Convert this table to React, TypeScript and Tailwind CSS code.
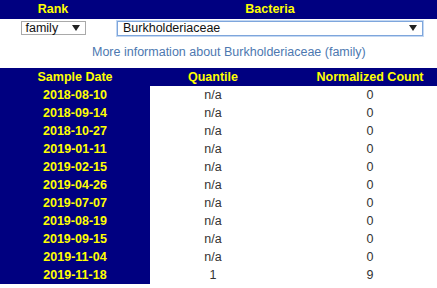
const rows: [string, string, string][] = [
  ['2018-08-10', 'n/a', '0'],
  ['2018-09-14', 'n/a', '0'],
  ['2018-10-27', 'n/a', '0'],
  ['2019-01-11', 'n/a', '0'],
  ['2019-02-15', 'n/a', '0'],
  ['2019-04-26', 'n/a', '0'],
  ['2019-07-07', 'n/a', '0'],
  ['2019-08-19', 'n/a', '0'],
  ['2019-09-15', 'n/a', '0'],
  ['2019-11-04', 'n/a', '0'],
  ['2019-11-18', '1', '9'],
]

function Arrow() {
  return (
    <svg width="8" height="6" viewBox="0 0 8 6" className="shrink-0">
      <path d="M0 0h8L4 6z" fill="#222" />
    </svg>
  )
}

function App() {
  return (
    <div className="w-[437px] h-[288px] overflow-hidden bg-white font-['Liberation_Sans',Arial,sans-serif] text-[12.5px]">
      <div className="w-[464px]">
        {/* Rank / Bacteria pickers */}
        <div className="grid grid-cols-[106px_328px] h-[19px] bg-[#000080] text-[#ffff00] font-bold items-center text-center leading-none">
          <div>Rank</div>
          <div>Bacteria</div>
        </div>
        <div className="grid grid-cols-[106px_328px] h-[18px] items-center">
          <div className="flex justify-center">
            <div className="w-[65px] h-[14px] border border-[#a9a9a9] flex items-center justify-between pl-[4px] pr-[5px] text-[#111] leading-none">
              <span>family</span>
              <Arrow />
            </div>
          </div>
          <div className="flex justify-center">
            <div className="w-[306px] h-[15px] border border-[#7ea6dc] outline outline-1 outline-[#c4d8f2] flex items-center justify-between pl-[5px] pr-[5px] text-[#111] leading-none">
              <span>Burkholderiaceae</span>
              <Arrow />
            </div>
          </div>
        </div>
        <div className="h-[31px] flex items-center pl-[92px] text-[#4d78b0]">
          More information about Burkholderiaceae (family)
        </div>

        {/* Sample table */}
        <div className="grid grid-cols-[150px_126px_188px] auto-rows-[18px] text-center leading-[18px]">
          <div className="bg-[#000080] text-[#ffff00] font-bold">Sample Date</div>
          <div className="bg-[#000080] text-[#ffff00] font-bold">Quantile</div>
          <div className="bg-[#000080] text-[#ffff00] font-bold">Normalized Count</div>
          {rows.map(([date, q, n]) => (
            <div key={date} className="contents">
              <div className="bg-[#000080] text-[#ffff00] font-bold">{date}</div>
              <div className="text-[#333]">{q}</div>
              <div className="text-[#333]">{n}</div>
            </div>
          ))}
        </div>
      </div>
    </div>
  )
}

export default App
